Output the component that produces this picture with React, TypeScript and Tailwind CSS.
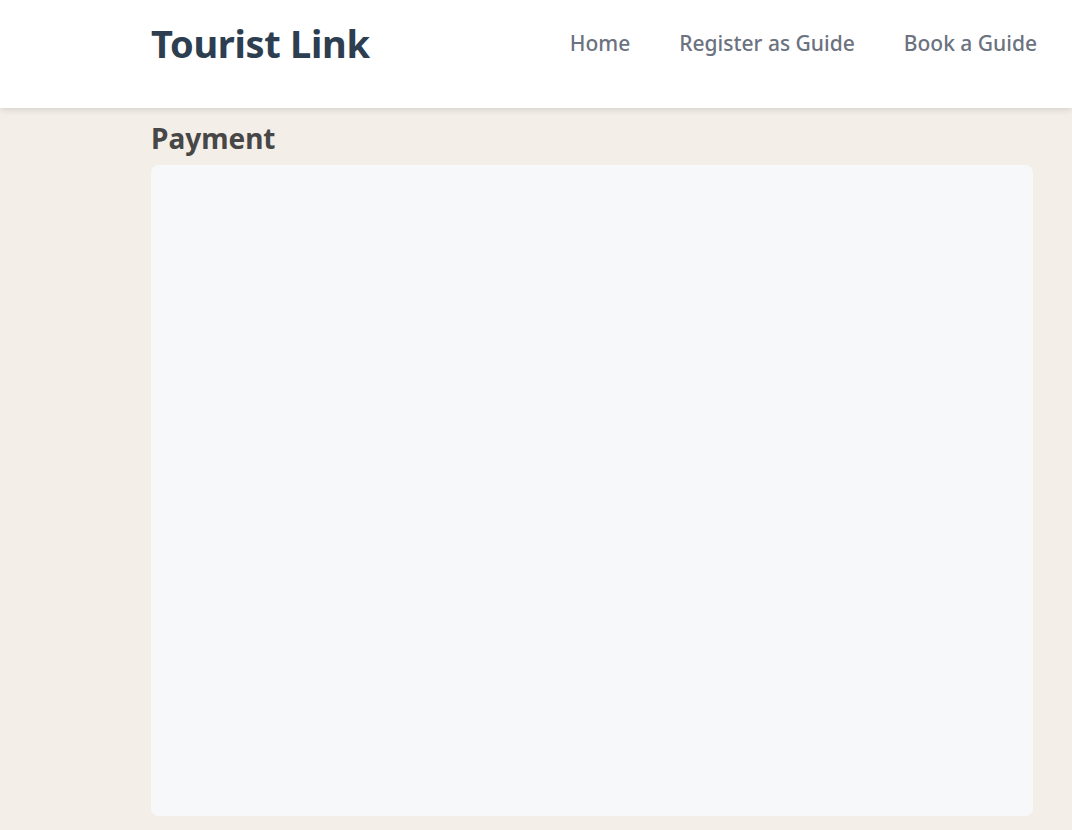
const navLinks = ['Home', 'Register as Guide', 'Book a Guide'];

export default function App() {
  return (
    <div className="min-h-[830px] bg-[#f3efe8] font-['Noto_Sans',sans-serif]">
      <header className="h-[108px] bg-white shadow-[0_2px_6px_rgba(0,0,0,0.12)] relative z-10">
        <div className="flex items-center justify-between h-[86px] pl-[151px] pr-[35px]">
          <h1 className="text-[38px] leading-[48px] font-bold text-[#2c3e50] tracking-[-0.3px]">Tourist Link</h1>
          <nav className="flex items-center gap-[49px]">
            {navLinks.map((link) => (
              <a key={link} href="#" className="text-[21px] leading-[28px] font-medium text-[#6b7280]">
                {link}
              </a>
            ))}
          </nav>
        </div>
      </header>

      <main className="pl-[151px] pr-[39px] pt-[13px]">
        <h2 className="text-[28px] leading-[35px] font-bold text-[#474747] mb-[9px]">Payment</h2>
        <div className="h-[651px] rounded-lg bg-[#f7f8fa]" />
      </main>
    </div>
  );
}
